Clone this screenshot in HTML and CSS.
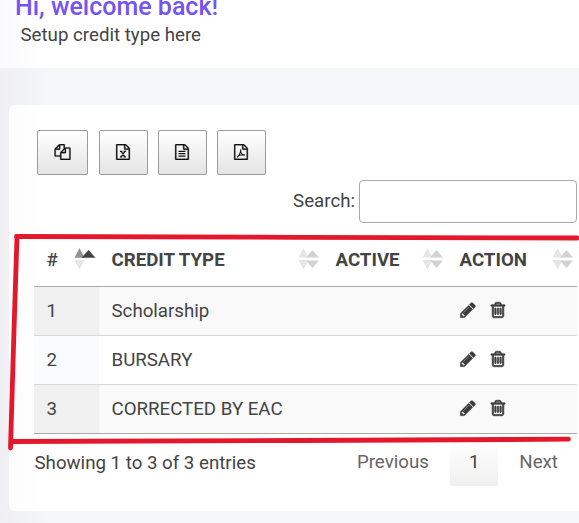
FILE: index.html
```html
<!DOCTYPE html>
<html lang="en">
<head>
<meta charset="utf-8">
<title>Credit types</title>
<link rel="stylesheet" href="styles.css">
</head>
<body>
<svg class="defs" aria-hidden="true">
  <symbol id="pencil" viewBox="0 0 1792 1792"><path d="M491 1536l91-91-235-235-91 91v107h128v128h107zm523-928q0-22-22-22-10 0-17 7l-542 542q-7 7-7 17 0 22 22 22 10 0 17-7l542-542q7-7 7-17zm-54-192l416 416-832 832h-416v-416zm683 96q0 53-37 90l-166 166-416-416 166-165q36-38 90-38 53 0 91 38l235 234q37 39 37 91z"/></symbol>
  <symbol id="trash" viewBox="0 0 1792 1792"><path d="M704 736v576q0 14-9 23t-23 9h-64q-14 0-23-9t-9-23v-576q0-14 9-23t23-9h64q14 0 23 9t9 23zm256 0v576q0 14-9 23t-23 9h-64q-14 0-23-9t-9-23v-576q0-14 9-23t23-9h64q14 0 23 9t9 23zm256 0v576q0 14-9 23t-23 9h-64q-14 0-23-9t-9-23v-576q0-14 9-23t23-9h64q14 0 23 9t9 23zm128 724v-948h-896v948q0 22 7 40.5t14.5 27 10.5 8.5h832q3 0 10.5-8.5t14.5-27 7-40.500zm-672-1076h448l-48-117q-7-9-17-11h-317q-10 2-17 11zm928 32v64q0 14-9 23t-23 9h-96v948q0 83-47 143.500t-113 60.500h-832q-66 0-113-58.500t-47-141.500v-952h-96q-14 0-23-9t-9-23v-64q0-14 9-23t23-9h309l70-167q15-37 54-63t79-26h320q40 0 79 26t54 63l70 167h309q14 0 23 9t9 23z"/></symbol>
  <symbol id="copy" viewBox="0 0 1792 1792"><path d="M1696 384q40 0 68 28t28 68v1216q0 40-28 68t-68 28h-960q-40 0-68-28t-28-68v-288h-544q-40 0-68-28t-28-68v-672q0-40 20-88t48-76l408-408q28-28 76-48t88-20h416q40 0 68 28t28 68v328q68-40 128-40h416zm-544 213l-299 299h299v-299zm-640-384l-299 299h299v-299zm196 647l316-316v-416h-384v416q0 40-28 68t-68 28h-416v640h512v-256q0-40 20-88t48-76zm956 804v-1152h-384v416q0 40-28 68t-68 28h-416v640h896z"/></symbol>
  <symbol id="file" viewBox="0 0 1792 1792"><path d="M1596 380q28 28 48 76t20 88v1152q0 40-28 68t-68 28h-1344q-40 0-68-28t-28-68v-1600q0-40 28-68t68-28h896q40 0 88 20t76 48zm-444-244v376h376q-10-29-22-41l-313-313q-12-12-41-22zm384 1528v-1024h-416q-40 0-68-28t-28-68v-416h-768v1536h1280z"/></symbol>
  <symbol id="sort" viewBox="0 0 22 22"><path fill="#e6e6e6" d="M5.500 0l5 9.500h-10zM5.500 21.500l-5-9.500h10z"/><path fill="#d2d2d2" d="M14.500 2l6.500 7.500h-13zM14.500 20l-6.500-7.500h13z"/></symbol>
  <symbol id="sort-asc" viewBox="0 0 22 22"><path fill="#929292" d="M5.500 0l5 9.800h-10z"/><path fill="#e6e6e6" d="M5.500 21.500l-5-9.500h10z"/><path fill="#444" d="M14.500 2l7 7.800h-14z"/></symbol>
</svg>
<header class="page-header">
  <h1>Hi, welcome back!</h1>
  <p>Setup credit type here</p>
</header>
<main class="card">
  <div class="buttons">
    <button class="wide" aria-label="Copy"><svg><use href="#copy"/></svg></button>
    <button aria-label="Excel"><svg viewBox="0 0 1792 1792"><use href="#file"/><path class="ink" d="M560 820h260M970 820h260M560 1430h260M970 1430h260M690 820l420 610M1110 820l-420 610"/></svg></button>
    <button aria-label="CSV"><svg viewBox="0 0 1792 1792"><use href="#file"/><path class="ink" d="M512 830h768M512 1088h768M512 1344h768"/></svg></button>
    <button aria-label="PDF"><svg viewBox="0 0 1792 1792"><use href="#file"/><path class="ink thin" d="M440 1490c180-60 430-520 430-880c-80 250 80 560 430 680M590 1300c200-90 440-130 740-90"/></svg></button>
  </div>
  <label class="search"><span>Search:</span><input type="search"></label>
  <table>
    <colgroup><col class="c1"><col class="c2"><col class="c3"><col class="c4"></colgroup>
    <thead>
      <tr>
        <th><div><span class="hash">#</span><svg><use href="#sort-asc"/></svg></div></th>
        <th><div><span>CREDIT TYPE</span><svg><use href="#sort"/></svg></div></th>
        <th><div><span>ACTIVE</span><svg><use href="#sort"/></svg></div></th>
        <th><div><span>ACTION</span><svg><use href="#sort"/></svg></div></th>
      </tr>
    </thead>
    <tbody>
      <tr><td>1</td><td>Scholarship</td><td></td><td><div class="actions"><svg><use href="#pencil"/></svg><svg class="bin"><use href="#trash"/></svg></div></td></tr>
      <tr><td>2</td><td>BURSARY</td><td></td><td><div class="actions"><svg><use href="#pencil"/></svg><svg class="bin"><use href="#trash"/></svg></div></td></tr>
      <tr><td>3</td><td>CORRECTED BY EAC</td><td></td><td><div class="actions"><svg><use href="#pencil"/></svg><svg class="bin"><use href="#trash"/></svg></div></td></tr>
    </tbody>
  </table>
  <footer>
    <span class="info">Showing 1 to 3 of 3 entries</span>
    <nav><a>Previous</a><a class="current">1</a><a>Next</a></nav>
  </footer>
</main>
<svg class="marker" viewBox="0 0 579 523" aria-hidden="true">
  <path d="M16.500 236.500L300 237.300L577 238"/>
  <path d="M17 237L14 330L10.500 448"/>
  <path d="M12 441.500L300 440.500L568.500 439.200"/>
</svg>
</body>
</html>
```
FILE: styles.css
```css
* { box-sizing: border-box; }
body {
  margin: 0;
  width: 579px;
  height: 523px;
  overflow: hidden;
  background: linear-gradient(90deg, #efeff4 0, #f5f6f9 50px, #f5f6f9 100%);
  font-family: Roboto, sans-serif;
  font-size: 18.700px;
  line-height: 24px;
  color: #444;
}
.defs { display: none; }
svg { display: block; }
.page-header {
  height: 68px;
  background: linear-gradient(90deg, #fafafc 0, #fff 45px);
  overflow: hidden;
}
h1 {
  margin: -9px 0 0 15px;
  font-size: 25px;
  line-height: 32px;
  font-weight: 500;
  color: #7555ef;
  white-space: nowrap;
}
.page-header p { margin: 0 0 0 20.500px; }
.card {
  margin: 37px 0 0 9px;
  height: 406px;
  padding: 25px 2px 0 25px;
  border-radius: 5px 0 0 5px;
  background: linear-gradient(90deg, #fcfcfd 0, #fff 36px);
}
.buttons { display: flex; gap: 11px; padding-left: 3px; }
button {
  width: 49px;
  height: 45px;
  margin-right: -1px;
  padding: 0 1px 1px 0;
  display: flex;
  align-items: center;
  justify-content: center;
  border: 1px solid #9b9b9b;
  border-radius: 2px;
  background: linear-gradient(#fff, #e4e4e4);
}
button.wide { width: 51px; margin-right: 0; padding-right: 0; }
button svg { width: 16px; height: 16px; fill: #111; stroke: #111; stroke-width: 35; }
button.wide svg { width: 17px; }
button .ink { fill: none; stroke-width: 140; }
button .thin { stroke-width: 120; }
.search { display: flex; align-items: center; justify-content: flex-end; gap: 4px; margin-top: 5px; }
.search span { padding-bottom: 2px; }
.search input {
  width: 218px;
  height: 43px;
  border: 1px solid #aaa;
  border-radius: 4px;
  background: #fff;
}
table {
  width: 543px;
  margin-top: 9px;
  table-layout: fixed;
  border-collapse: separate;
  border-spacing: 0;
  border-bottom: 1px solid #aaa;
}
.c1 { width: 65px; }
.c2 { width: 224px; }
.c3 { width: 124px; }
.c4 { width: 130px; }
th { height: 55px; padding: 0 3px 0 13px; border-bottom: 1px solid #aaa; text-align: left; font-weight: 700; }
th div { display: flex; align-items: center; justify-content: space-between; }
th span { padding-top: 2px; margin-left: -.5px; }
th svg { width: 22px; height: 22px; margin-right: .5px; }
.hash { font-weight: 500; }
td { height: 49px; padding: 0 12.500px; border-bottom: 1px solid #d8d8d8; }
tbody tr:nth-child(odd) td { background: #f9f9f9; }
tbody tr:nth-child(odd) td:first-child { background: #f0f0f1; }
tbody tr:nth-child(even) td:first-child { background: #fafbff; }
tbody tr:last-child td { height: 48px; border-bottom: 0; }
.actions { display: flex; gap: 12px; margin: -2px 0 0 -1px; }
.actions svg { width: 18px; height: 18px; fill: #3c3c3c; stroke: #3c3c3c; stroke-width: 30; }
.actions .bin { stroke-width: 75; }
footer { display: flex; justify-content: space-between; margin-top: 4px; }
.info { padding: 13px 0 0 .5px; }
nav { display: flex; color: #666; }
nav a { height: 48px; padding: 12px 19px 0 21px; }
nav a:first-child { padding: 12px 21.500px 0 0; }
nav .current {
  width: 48px;
  padding: 12px 0 0;
  text-align: center;
  color: #444;
  border-radius: 2px;
  background: linear-gradient(#fff, #f0f0f0);
}
.marker { position: absolute; inset: 0; width: 579px; height: 523px; fill: none; stroke: #e4172d; stroke-width: 4.800; stroke-linecap: round; stroke-linejoin: round; pointer-events: none; }
```
